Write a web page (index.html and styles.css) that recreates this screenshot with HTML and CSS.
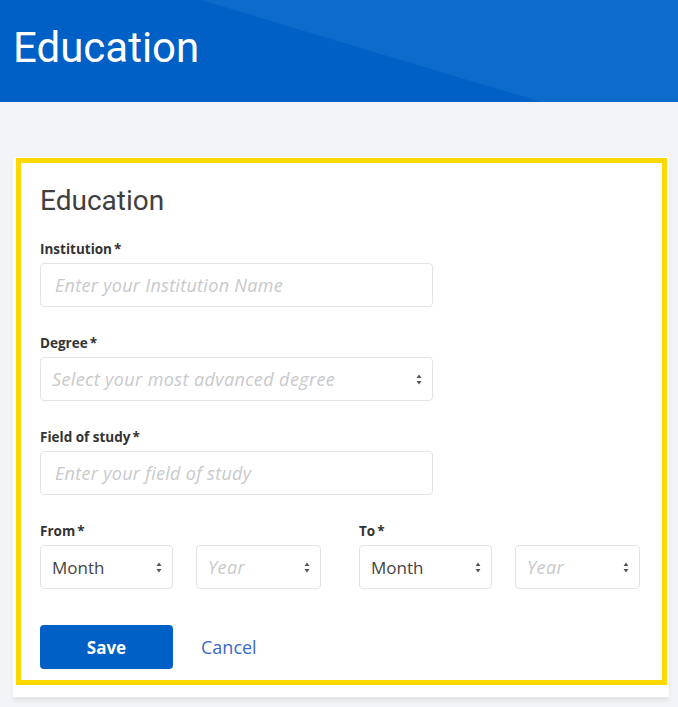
FILE: index.html
```html
<!DOCTYPE html>
<html lang="en">
<head>
<meta charset="utf-8">
<title>Education</title>
<link rel="stylesheet" href="styles.css">
</head>
<body>
<header class="hero">
  <h1 class="hero-title">Education</h1>
</header>
<main class="page">
  <section class="card">
    <div class="highlight">
      <h2 class="card-title">Education</h2>
      <div class="field">
        <label class="label">Institution<span class="req">*</span></label>
        <input class="control input" type="text" placeholder="Enter your Institution Name">
      </div>
      <div class="field">
        <label class="label">Degree<span class="req">*</span></label>
        <div class="control select wide">
          <span class="ph">Select your most advanced degree</span>
          <svg class="arrows" width="6" height="11" viewBox="0 0 6 11"><path d="M3 0.5 L5.5 4 H0.5 Z M3 10.5 L0.5 7 H5.5 Z" fill="#555"/></svg>
        </div>
      </div>
      <div class="field">
        <label class="label">Field of study<span class="req">*</span></label>
        <input class="control input" type="text" placeholder="Enter your field of study">
      </div>
      <div class="dates">
        <div class="date-group">
          <label class="label">From<span class="req">*</span></label>
          <div class="pair">
            <div class="control select month">
              <span class="val">Month</span>
              <svg class="arrows" width="6" height="11" viewBox="0 0 6 11"><path d="M3 0.5 L5.5 4 H0.5 Z M3 10.5 L0.5 7 H5.5 Z" fill="#555"/></svg>
            </div>
            <div class="control select year">
              <span class="ph">Year</span>
              <svg class="arrows" width="6" height="11" viewBox="0 0 6 11"><path d="M3 0.5 L5.5 4 H0.5 Z M3 10.5 L0.5 7 H5.5 Z" fill="#555"/></svg>
            </div>
          </div>
        </div>
        <div class="date-group">
          <label class="label">To<span class="req">*</span></label>
          <div class="pair">
            <div class="control select month">
              <span class="val">Month</span>
              <svg class="arrows" width="6" height="11" viewBox="0 0 6 11"><path d="M3 0.5 L5.5 4 H0.5 Z M3 10.5 L0.5 7 H5.5 Z" fill="#555"/></svg>
            </div>
            <div class="control select year">
              <span class="ph">Year</span>
              <svg class="arrows" width="6" height="11" viewBox="0 0 6 11"><path d="M3 0.5 L5.5 4 H0.5 Z M3 10.5 L0.5 7 H5.5 Z" fill="#555"/></svg>
            </div>
          </div>
        </div>
      </div>
      <div class="actions">
        <button class="btn-save" type="button">Save</button>
        <a class="btn-cancel" href="#">Cancel</a>
      </div>
    </div>
  </section>
</main>
</body>
</html>
```
FILE: styles.css
```css
* { box-sizing: border-box; }
html, body { margin: 0; padding: 0; }
body {
  background: #f3f4f7;
  font-family: "Open Sans", "Liberation Sans", Arial, sans-serif;
  width: 678px;
  height: 707px;
  overflow: hidden;
}
.hero {
  position: relative;
  height: 102px;
  background: #0060c6;
  overflow: hidden;
}
.hero::before {
  content: "";
  position: absolute;
  inset: 0;
  background: #0d6bcb;
  clip-path: polygon(201px 0, 100% 0, 100% 100%, 541px 100%);
}
.hero-title {
  position: relative;
  margin: 0;
  padding: 27px 0 0 13px;
  font-family: Roboto, "Liberation Sans", Arial, sans-serif;
  font-size: 42px;
  line-height: 42px;
  font-weight: 400;
  color: #fff;
}
.page {
  padding: 55px 9px 0 13px;
}
.card {
  background: #fff;
  padding: 1px 2px 12px 3px;
  box-shadow: 0 4px 4px rgba(0, 0, 0, 0.06);
}
.highlight {
  border: 5px solid #ffd800;
  padding: 21px 19px 11px 19px;
}
.card-title {
  margin: 0 0 24px;
  font-family: Roboto, "Liberation Sans", Arial, sans-serif;
  font-size: 28px;
  line-height: 33px;
  font-weight: 400;
  color: #3f3f42;
}
.field {
  display: flex;
  flex-direction: column;
  margin-bottom: 28px;
}
.label {
  display: block;
  font-size: 13.5px;
  line-height: 16px;
  font-weight: 700;
  color: #333;
  margin-bottom: 6px;
}
.req { margin-left: 2px; }
.control {
  height: 44px;
  border: 1px solid #e4e4e6;
  border-radius: 4px;
  background: #fff;
  font-family: "Open Sans", "Liberation Sans", Arial, sans-serif;
  font-size: 17px;
}
.input {
  width: 393px;
  padding: 0 14px;
  outline: none;
  color: #444;
  font-size: 18px;
  letter-spacing: 0.3px;
}
.input::placeholder {
  color: #c8c9cc;
  font-style: italic;
}
.select {
  position: relative;
  display: flex;
  align-items: center;
  padding: 0 10px 0 11px;
}
.select .arrows {
  margin-left: auto;
  flex: none;
}
.wide { width: 393px; }
.ph {
  color: #c8c9cc;
  font-style: italic;
  font-size: 18px;
  letter-spacing: 0.4px;
}
.val { color: #444; }
.dates {
  display: flex;
  gap: 38px;
}
.pair {
  display: flex;
  gap: 23px;
}
.month { width: 133px; }
.year { width: 125px; }
.actions {
  display: flex;
  align-items: center;
  gap: 28px;
  margin-top: 36px;
}
.btn-save {
  width: 133px;
  height: 44px;
  border: none;
  border-radius: 4px;
  background: #0060c6;
  color: #fff;
  font-family: "Open Sans", "Liberation Sans", Arial, sans-serif;
  font-size: 17px;
  font-weight: 700;
}
.btn-cancel {
  color: #3a6abf;
  font-size: 18px;
  text-decoration: none;
}
```
